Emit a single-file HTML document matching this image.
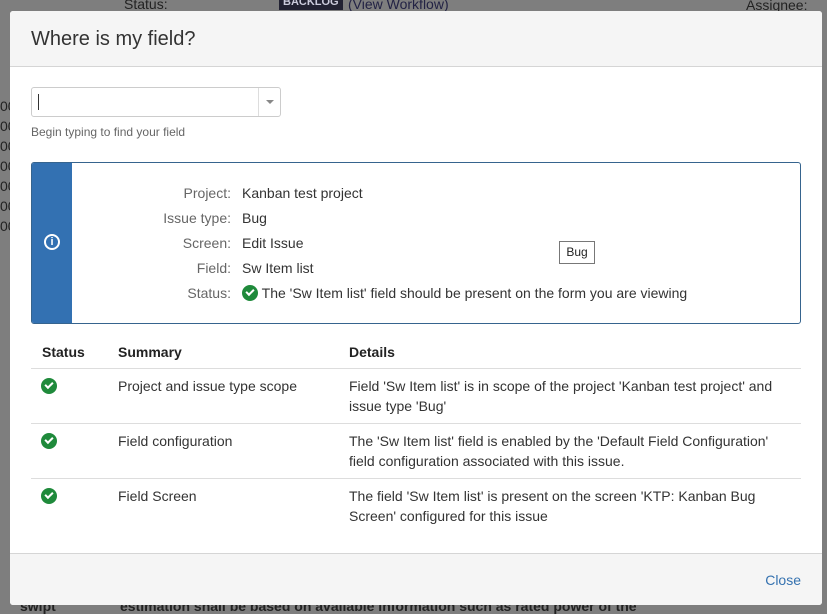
<!DOCTYPE html>
<html><head><style>
*{box-sizing:border-box;margin:0;padding:0}
body{width:827px;height:611px;overflow:hidden;background:#7e7e7e;font-family:"Liberation Sans",Arial,sans-serif;color:#333;position:relative;font-size:14px}
.bg{position:absolute;color:#222;font-size:14px}
.modal{position:absolute;left:10px;top:11px;width:812px;height:594px;background:#fff;border-radius:3px;overflow:hidden}
.hdr{height:56px;background:#f5f5f5;border-bottom:1px solid #d5d5d5;padding:17px 21px 0}
.hdr h1{font-weight:normal;font-size:20px;color:#333}
.sel{position:absolute;left:21px;top:76px;width:250px;height:30px;border:1px solid #ccc;border-radius:3px}
.sel .cur{position:absolute;left:6px;top:6px;width:1px;height:16px;background:#333}
.sel .dd{position:absolute;right:0;top:0;width:22px;height:28px;border-left:1px solid #ddd}
.sel .dd:after{content:"";position:absolute;left:7px;top:12px;border:4px solid transparent;border-top:4px solid #888}
.hint{position:absolute;left:21px;top:114px;font-size:12px;color:#666}
.info{position:absolute;left:21px;top:151px;width:770px;height:162px;border:1px solid #36648e;border-radius:3px;overflow:hidden}
.strip{position:absolute;left:0;top:0;width:40px;height:100%;background:#3371b2}
.strip .ic{position:absolute;left:12px;top:71px;width:16px;height:16px;border:2px solid #fff;border-radius:50%;color:#fff;font-size:11px;font-weight:bold;text-align:center;line-height:12px}
.row{position:absolute;font-size:14px}
.lbl{left:70px;width:151px;text-align:right;color:#666}
.val{left:210px;color:#333}
.chk{display:inline-block;width:16px;height:16px;border-radius:50%;background:#1f8a3b;position:relative;vertical-align:-3px}
.chk:after{content:"";position:absolute;left:4px;top:4px;width:6px;height:3px;border-left:2px solid #fff;border-bottom:2px solid #fff;transform:rotate(-45deg)}
.tip{position:absolute;left:559px;top:241px;width:36px;height:23px;border:1px solid #777;background:#fff;font-size:12px;text-align:center;line-height:21px;color:#222}
.th{position:absolute;top:333px;font-weight:bold;font-size:14px;color:#222}
.line{position:absolute;left:21px;width:770px;height:1px;background:#ddd}
.cell{position:absolute;font-size:14px;color:#333;line-height:20px}
.ftr{position:absolute;left:0;top:542px;width:812px;height:52px;background:#f5f5f5;border-top:1px solid #d5d5d5}
.ftr a{position:absolute;right:21px;top:18px;color:#3572b0;font-size:14px}
</style></head><body>
<div class="bg" style="left:124px;top:-4px;color:#222">Status:</div>
<div class="bg" style="left:279px;top:-6px;background:#223;color:#ccd;font-size:11px;font-weight:bold;padding:2px 4px">BACKLOG</div>
<div class="bg" style="left:348px;top:-4px;color:#224">(View Workflow)</div>
<div class="bg" style="left:746px;top:-3px">Assignee:</div>
<div class="bg" style="left:0;top:96px;line-height:20px">00<br>00<br>00<br>00<br>00<br>00<br>00</div>
<div class="bg" style="left:120px;top:598px;font-weight:bold">estimation shall be based on available information such as rated power of the</div>
<div class="bg" style="left:20px;top:598px;font-weight:bold">swipt</div>
<div class="modal">
<div class="hdr"><h1>Where is my field?</h1></div>
<div class="sel"><div class="cur"></div><div class="dd"></div></div>
<div class="hint">Begin typing to find your field</div>
<div class="info">
<div class="strip"><div class="ic">i</div></div>
</div>
<div class="row lbl" style="top:174px">Project:</div><div class="row val" style="top:174px;left:232px">Kanban test project</div>
<div class="row lbl" style="top:199px">Issue type:</div><div class="row val" style="top:199px;left:232px">Bug</div>
<div class="row lbl" style="top:224px">Screen:</div><div class="row val" style="top:224px;left:232px">Edit Issue</div>
<div class="row lbl" style="top:249px">Field:</div><div class="row val" style="top:249px;left:232px">Sw Item list</div>
<div class="row lbl" style="top:274px">Status:</div><div class="row val" style="top:274px;left:232px"><span class="chk"></span> The 'Sw Item list' field should be present on the form you are viewing</div>
<div class="th" style="left:32px">Status</div>
<div class="th" style="left:108px">Summary</div>
<div class="th" style="left:339px">Details</div>
<div class="line" style="top:357px"></div>
<div class="cell" style="left:31px;top:365px"><span class="chk"></span></div>
<div class="cell" style="left:108px;top:365px">Project and issue type scope</div>
<div class="cell" style="left:339px;top:365px">Field 'Sw Item list' is in scope of the project 'Kanban test project' and<br>issue type 'Bug'</div>
<div class="line" style="top:412px"></div>
<div class="cell" style="left:31px;top:420px"><span class="chk"></span></div>
<div class="cell" style="left:108px;top:420px">Field configuration</div>
<div class="cell" style="left:339px;top:420px">The 'Sw Item list' field is enabled by the 'Default Field Configuration'<br>field configuration associated with this issue.</div>
<div class="line" style="top:467px"></div>
<div class="cell" style="left:31px;top:475px"><span class="chk"></span></div>
<div class="cell" style="left:108px;top:475px">Field Screen</div>
<div class="cell" style="left:339px;top:475px">The field 'Sw Item list' is present on the screen 'KTP: Kanban Bug<br>Screen' configured for this issue</div>
<div class="ftr"><a>Close</a></div>
</div>
<div class="tip">Bug</div>
</body></html>
